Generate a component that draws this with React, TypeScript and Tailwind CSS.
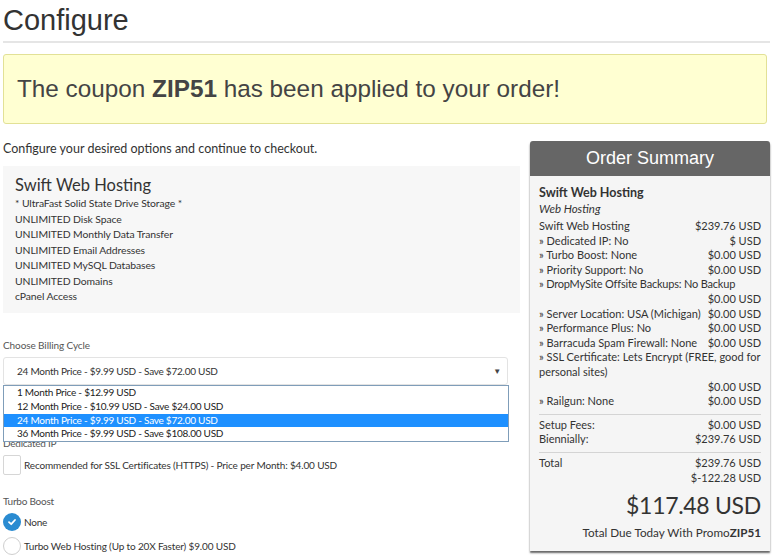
import React from "react";

const body = { fontFamily: "Lato, 'Open Sans', sans-serif" };

const rows: [string, string][] = [
  ["Swift Web Hosting", "$239.76 USD"],
  ["» Dedicated IP: No", "$ USD"],
  ["» Turbo Boost: None", "$0.00 USD"],
  ["» Priority Support: No", "$0.00 USD"],
];

const Row = ({ l, r }: { l: string; r: string }) => (
  <div className="flex justify-between h-[14.6px] items-center">
    <span>{l}</span>
    <span>{r}</span>
  </div>
);

const OrderSummary = () => (
  <div className="w-[240px] shrink-0 mt-[1px] rounded-t-[3px] shadow-[0_2px_2px_rgba(0,0,0,0.6)] bg-[#f5f5f5] self-start" style={body}>
    <div className="h-[35px] bg-[#666666] rounded-t-[3px] flex items-center justify-center text-white text-[18px] font-['Liberation_Sans',sans-serif]">
      Order Summary
    </div>
    <div className="px-[9px] pt-[9px] pb-[10px] text-[11px] text-[#333]">
      <div className="text-[12.5px] font-bold leading-[16px]">Swift Web Hosting</div>
      <div className="italic text-[11.5px] leading-[16px] mb-[2px]">Web Hosting</div>
      {rows.map(([l, r]) => (
        <Row key={l} l={l} r={r} />
      ))}
      <div className="h-[14.6px] flex items-center tracking-[-0.2px]">» DropMySite Offsite Backups: No Backup</div>
      <div className="h-[14.6px] flex items-center justify-end">$0.00 USD</div>
      <Row l="» Server Location: USA (Michigan)" r="$0.00 USD" />
      <Row l="» Performance Plus: No" r="$0.00 USD" />
      <Row l="» Barracuda Spam Firewall: None" r="$0.00 USD" />
      <div className="leading-[14.6px]">» SSL Certificate: Lets Encrypt (FREE, good for personal sites)</div>
      <div className="h-[14.6px] flex items-center justify-end">$0.00 USD</div>
      <Row l="» Railgun: None" r="$0.00 USD" />
      <div className="border-t border-[#d4d4d4] mt-[5px] pt-[3px]">
        <Row l="Setup Fees:" r="$0.00 USD" />
        <Row l="Biennially:" r="$239.76 USD" />
      </div>
      <div className="border-t border-[#d4d4d4] mt-[5px] pt-[3px]">
        <div className="flex justify-between">
          <span className="leading-[14.6px]">Total</span>
          <div className="text-right leading-[14.6px]">
            <div>$239.76 USD</div>
            <div>$-122.28 USD</div>
          </div>
        </div>
        <div className="text-right text-[23px] tracking-[-0.3px] leading-[34px] mt-[3px]">$117.48 USD</div>
        <div className="text-right text-[11.7px] leading-[18px] mt-[1px]">
          Total Due Today With Promo<b>ZIP51</b>
        </div>
      </div>
    </div>
  </div>
);

const billing = [
  "1 Month Price - $12.99 USD",
  "12 Month Price - $10.99 USD - Save $24.00 USD",
  "24 Month Price - $9.99 USD - Save $72.00 USD",
  "36 Month Price - $9.99 USD - Save $108.00 USD",
];

const features = [
  "* UltraFast Solid State Drive Storage *",
  "UNLIMITED Disk Space",
  "UNLIMITED Monthly Data Transfer",
  "UNLIMITED Email Addresses",
  "UNLIMITED MySQL Databases",
  "UNLIMITED Domains",
  "cPanel Access",
];

export default function App() {
  return (
    <div className="w-[773px] h-[557px] overflow-hidden bg-white text-[#333] px-[3px]">
      <h1 className="text-[29px] leading-[40px] font-['Liberation_Sans',sans-serif] border-b-2 border-[#e5e5e5] pb-[1px]">
        Configure
      </h1>
      <div className="mt-[11px] mr-[3px] h-[70px] bg-[#ffffd2] border border-[#e2e196] rounded-[3px] flex items-center px-[13px] text-[24.3px] text-[#444] font-['Liberation_Sans',sans-serif]">
        <span>
          The coupon <b>ZIP51</b> has been applied to your order!
        </span>
      </div>
      <div className="flex gap-[10px] mt-[16px]" style={body}>
        <div className="flex-1">
          <p className="text-[12.5px] leading-[18px]">Configure your desired options and continue to checkout.</p>
          <div className="mt-[8px] bg-[#f7f7f7] pl-[12px] pt-[8px] h-[147px]">
            <div className="text-[16.5px] leading-[22px]">Swift Web Hosting</div>
            <div className="text-[10.4px] tracking-[-0.1px] leading-[15.5px]">
              {features.map((f) => (
                <div key={f}>{f}</div>
              ))}
            </div>
          </div>
          <div className="mt-[24px] text-[10px] tracking-[-0.1px] text-[#555] leading-[16px]">Choose Billing Cycle</div>
          <div className="relative mt-[4px] mr-[12px] text-[10px] tracking-[-0.25px]">
            <div className="h-[28px] border border-[#e3e3e3] rounded-[3px] flex items-center justify-between pl-[13px] pr-[6px]">
              <span>24 Month Price - $9.99 USD - Save $72.00 USD</span>
              <span className="text-[8px] text-[#444]">▼</span>
            </div>
            <div className="absolute left-0 right-[-1px] top-[28px] bg-white border border-[#7f9db9] text-[#222] z-10">
              {billing.map((b, i) => (
                <div
                  key={b}
                  className={`h-[13.75px] leading-[13.75px] pl-[13px] ${i === 2 ? "bg-[#1e90ff] text-white" : ""}`}
                >
                  {b}
                </div>
              ))}
            </div>
            <div className="text-[#555] leading-[14px] mt-[51px]">Dedicated IP</div>
            <label className="flex items-center gap-[3px] mt-[5px]">
              <span className="w-[18px] h-[20px] border border-[#d6d6d6] rounded-[2px] bg-white" />
              <span className="tracking-[-0.15px]">Recommended for SSL Certificates (HTTPS) - Price per Month: $4.00 USD</span>
            </label>
            <div className="mt-[18px] text-[#555] leading-[16px]">Turbo Boost</div>
            <label className="flex items-center gap-[3px] mt-[4px]">
              <span className="w-[18px] h-[18px] rounded-full bg-[#2a8bd1] flex items-center justify-center">
                <svg width="10" height="10" viewBox="0 0 10 10">
                  <path d="M2 5.2 L4.2 7.2 L8 3" stroke="white" strokeWidth="1.8" fill="none" strokeLinecap="round" strokeLinejoin="round" />
                </svg>
              </span>
              <span>None</span>
            </label>
            <label className="flex items-center gap-[3px] mt-[6px]">
              <span className="w-[18px] h-[18px] rounded-full border border-[#cfcfcf] bg-white" />
              <span className="tracking-[-0.15px]">Turbo Web Hosting (Up to 20X Faster) $9.00 USD</span>
            </label>
          </div>
        </div>
        <OrderSummary />
      </div>
    </div>
  );
}
